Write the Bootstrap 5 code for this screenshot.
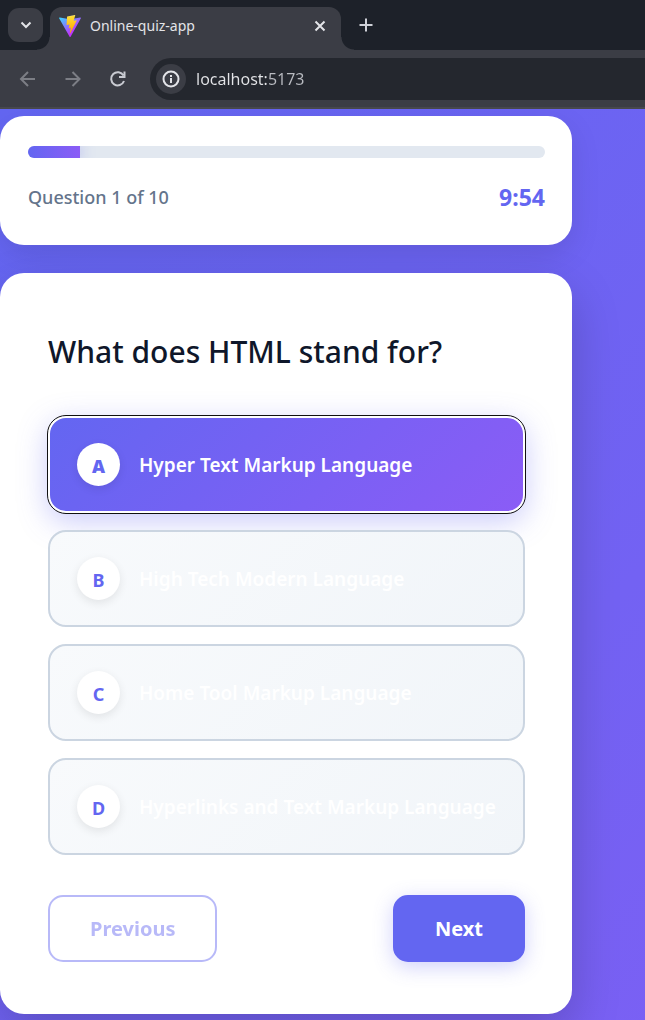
<!DOCTYPE html>
<html lang="en">
<head>
<meta charset="utf-8">
<meta name="viewport" content="width=device-width, initial-scale=1">
<title>Online-quiz-app</title>
<link rel="stylesheet" href="https://cdn.jsdelivr.net/npm/bootstrap@5.3.0/dist/css/bootstrap.min.css">
<style>
:root { --indigo: #6366f1; --violet: #8b5cf6; --chrome: #3b3d45; --strip: #1d2129; }
body { font-family: "Noto Sans", "Open Sans", sans-serif; }
button { font-family: inherit; }
.icon-btn { background: none; border: 0; padding: 0; display: flex; align-items: center; justify-content: center; flex: none; }

/* Browser frame */
.tab-strip { background: var(--strip); height: 50px; padding: 8px 8px 0; }
.tab-search { width: 35px; height: 34px; border-radius: 11px; background: var(--chrome); }
.tab-active { width: 291px; height: 43px; margin: -1px 17px 0 7px; padding: 0 14px 6px 9px; gap: 9px; border-radius: 12px 12px 0 0; background: var(--chrome); color: #e3e4e8; font-size: 14px; line-height: 20px; position: relative; }
.tab-active::before, .tab-active::after { content: ""; position: absolute; bottom: 0; width: 13px; height: 13px; }
.tab-active::before { left: -13px; background: radial-gradient(circle at 0 0, transparent 12px, var(--chrome) 13px); }
.tab-active::after { right: -13px; background: radial-gradient(circle at 100% 0, transparent 12px, var(--chrome) 13px); }
.tab-active svg { flex: none; }
.new-tab { height: 34px; }
.toolbar-row { background: var(--chrome); height: 59px; padding: 8px 0 8px 17px; border-bottom: 2px solid #47484d; }
.nav-btn { width: 22px; height: 22px; }
.nav-group { gap: 23px; margin-right: 21px; }
.address { height: 42px; background: #24272e; border-radius: 21px 0 0 21px; padding: 0 6px; }
.site-info { width: 30px; height: 30px; border-radius: 50%; background: var(--chrome); }
.address input { min-width: 0; border: 0; outline: 0; padding: 0; margin-left: 10px; font-size: 16px; line-height: 24px; color: transparent; background: linear-gradient(90deg, #e4e5e8 72px, #b9bbc1 72px); -webkit-background-clip: text; background-clip: text; }

/* Quiz */
.quiz-page { background: linear-gradient(135deg, var(--indigo), var(--violet) 1950px); padding: 7px 73px 6px 0; overflow: hidden; }
.panel { background: #fff; border-radius: 24px; }
.panel-status { padding: 30px 27px 34px 28px; margin-bottom: 28px; box-shadow: 0 10px 30px rgba(0,0,0,.1); }
.panel-question { padding: 56px 47px 52px 48px; box-shadow: 0 20px 50px rgba(0,0,0,.2); }
.progress.quiz-progress { height: 12px; border-radius: 6px; background: #e2e8f0; margin-bottom: 25px; }
.quiz-progress .progress-bar { background: linear-gradient(90deg, var(--indigo), var(--violet)); box-shadow: 0 0 15px rgba(99,102,241,.4); overflow: visible; }
.count-text { font-size: 18px; line-height: 28px; font-weight: 500; color: #64748b; }
.clock-text { font-size: 23px; line-height: 28px; font-weight: 700; color: var(--indigo); }
.question-title { font-size: 30px; line-height: 46px; font-weight: 500; color: #0f172a; margin: 0 0 41px; }
.option-list { display: grid; gap: 17px; margin-bottom: 40px; }
.option-btn { display: flex; align-items: center; gap: 19px; height: 97px; padding: 0 27px; border: 2px solid #cbd5e1; border-radius: 18px; background: linear-gradient(135deg, #f8fafc, #f1f5f9); color: #fff; font-size: 19px; line-height: 28px; font-weight: 600; text-align: left; }
.option-btn.chosen { border-color: #fff; background: linear-gradient(135deg, var(--indigo), var(--violet)) border-box; outline: 1px solid #101010; box-shadow: 0 8px 30px rgba(99,102,241,.35); }
.letter { width: 43px; height: 43px; flex: none; border-radius: 50%; background: #fff; color: var(--indigo); font-size: 18px; font-weight: 700; display: flex; align-items: center; justify-content: center; box-shadow: 0 3px 10px rgba(0,0,0,.09); padding-top: 2px; }
.chosen .letter { font-weight: 900; }
.step-btn { height: 67px; padding: 0 40px; border: 2px solid var(--indigo); border-radius: 15px; font-size: 20px; line-height: 28px; font-weight: 700; }
.step-prev { color: var(--indigo); background: #fff; opacity: .45; }
.step-next { color: #fff; background: var(--indigo); box-shadow: 0 5px 20px rgba(99,102,241,.3); }
</style>
</head>
<body>
<div class="d-flex flex-column min-vh-100">
<header>
  <div class="tab-strip d-flex">
    <button class="icon-btn tab-search" aria-label="Search tabs"><svg width="12" height="8" viewBox="0 0 12 8" fill="none" stroke="#e3e4e8" stroke-width="2"><path d="M1.5 1.5 6 6l4.500-4.500"/></svg></button>
    <div class="tab-active d-flex align-items-center">
      <svg width="22" height="22" viewBox="0 0 256 257"><defs><linearGradient id="va" x1="-.8%" x2="57.600%" y1="7.700%" y2="78.400%"><stop offset="0" stop-color="#41D1FF"/><stop offset="1" stop-color="#BD34FE"/></linearGradient><linearGradient id="vb" x1="43.400%" x2="50.300%" y1="2.200%" y2="89%"><stop offset="0" stop-color="#FFEA83"/><stop offset=".083" stop-color="#FFDD35"/><stop offset="1" stop-color="#FFA800"/></linearGradient></defs><path fill="url(#va)" d="M255.153 37.938 134.897 252.976c-2.483 4.440-8.862 4.466-11.382.048L.875 37.958c-2.746-4.814 1.371-10.646 6.827-9.670l120.385 21.517a6.537 6.537 0 0 0 2.322-.004l117.867-21.483c5.438-.991 9.574 4.796 6.877 9.620Z"/><path fill="url(#vb)" d="M185.432.063 96.440 17.501a3.268 3.268 0 0 0-2.634 3.014l-5.474 92.456a3.268 3.268 0 0 0 3.997 3.378l24.777-5.718c2.318-.535 4.413 1.507 3.936 3.838l-7.361 36.047c-.495 2.426 1.782 4.500 4.151 3.780l15.304-4.649c2.372-.72 4.652 1.360 4.150 3.788l-11.698 56.621c-.732 3.542 3.979 5.473 5.943 2.437l1.313-2.028 72.516-144.720c1.215-2.423-.88-5.186-3.540-4.672l-25.505 4.922c-2.396.462-4.435-1.770-3.759-4.114l16.646-57.705c.677-2.350-1.370-4.583-3.769-4.113Z"/></svg>
      <span class="flex-grow-1 text-truncate">Online-quiz-app</span>
      <button class="icon-btn" aria-label="Close tab"><svg width="14" height="14" viewBox="0 0 14 14" stroke="#e3e4e8" stroke-width="2"><path d="m2.500 2.500 9 9m0-9-9 9"/></svg></button>
    </div>
    <button class="icon-btn new-tab" aria-label="New tab"><svg width="16" height="16" viewBox="0 0 16 16" stroke="#cfd1d8" stroke-width="2"><path d="M8 1.500v13M1.500 8h13"/></svg></button>
  </div>
  <div class="toolbar-row d-flex align-items-center">
    <div class="nav-group d-flex">
    <button class="icon-btn nav-btn" aria-label="Back"><svg width="20" height="20" viewBox="0 0 20 20" fill="none" stroke="#7c7e85" stroke-width="2"><path d="M17 10H3.500M10 3l-7 7 7 7"/></svg></button>
    <button class="icon-btn nav-btn" aria-label="Forward"><svg width="20" height="20" viewBox="0 0 20 20" fill="none" stroke="#7c7e85" stroke-width="2"><path d="M2.500 10h13.500M9.500 3l7 7-7 7"/></svg></button>
    <button class="icon-btn nav-btn" aria-label="Reload"><svg width="20" height="20" viewBox="0 0 20 20" fill="none" stroke="#c9cbd2" stroke-width="2"><path d="M15.500 6.500A6.600 6.600 0 1 0 16 12M16.500 2.500v5.500h-5.500"/></svg></button>
    </div>
    <div class="address d-flex align-items-center flex-grow-1">
      <button class="icon-btn site-info" aria-label="Site information"><svg width="18" height="18" viewBox="0 0 18 18" fill="none" stroke="#e3e4e8" stroke-width="2"><circle cx="9" cy="9" r="7.500"/><path d="M9 8v5M9 5v2"/></svg></button>
      <input class="flex-grow-1" type="text" value="localhost:5173" aria-label="Address">
    </div>
  </div>
</header>
<main class="quiz-page flex-grow-1">
  <section class="panel panel-status">
    <div class="progress quiz-progress" role="progressbar" aria-label="Quiz progress" aria-valuenow="10" aria-valuemin="0" aria-valuemax="100"><div class="progress-bar" style="width:10%"></div></div>
    <div class="d-flex justify-content-between align-items-center"><span class="count-text">Question 1 of 10</span><span class="clock-text">9:54</span></div>
  </section>
  <section class="panel panel-question">
    <h1 class="question-title">What does HTML stand for?</h1>
    <div class="option-list">
      <button class="option-btn chosen"><span class="letter">A</span><span>Hyper Text Markup Language</span></button>
      <button class="option-btn"><span class="letter">B</span><span>High Tech Modern Language</span></button>
      <button class="option-btn"><span class="letter">C</span><span>Home Tool Markup Language</span></button>
      <button class="option-btn"><span class="letter">D</span><span>Hyperlinks and Text Markup Language</span></button>
    </div>
    <div class="d-flex justify-content-between">
      <button class="step-btn step-prev" disabled>Previous</button>
      <button class="step-btn step-next">Next</button>
    </div>
  </section>
</main>
</div>
<script src="https://cdn.jsdelivr.net/npm/bootstrap@5.3.0/dist/js/bootstrap.bundle.min.js"></script>
</body>
</html>
